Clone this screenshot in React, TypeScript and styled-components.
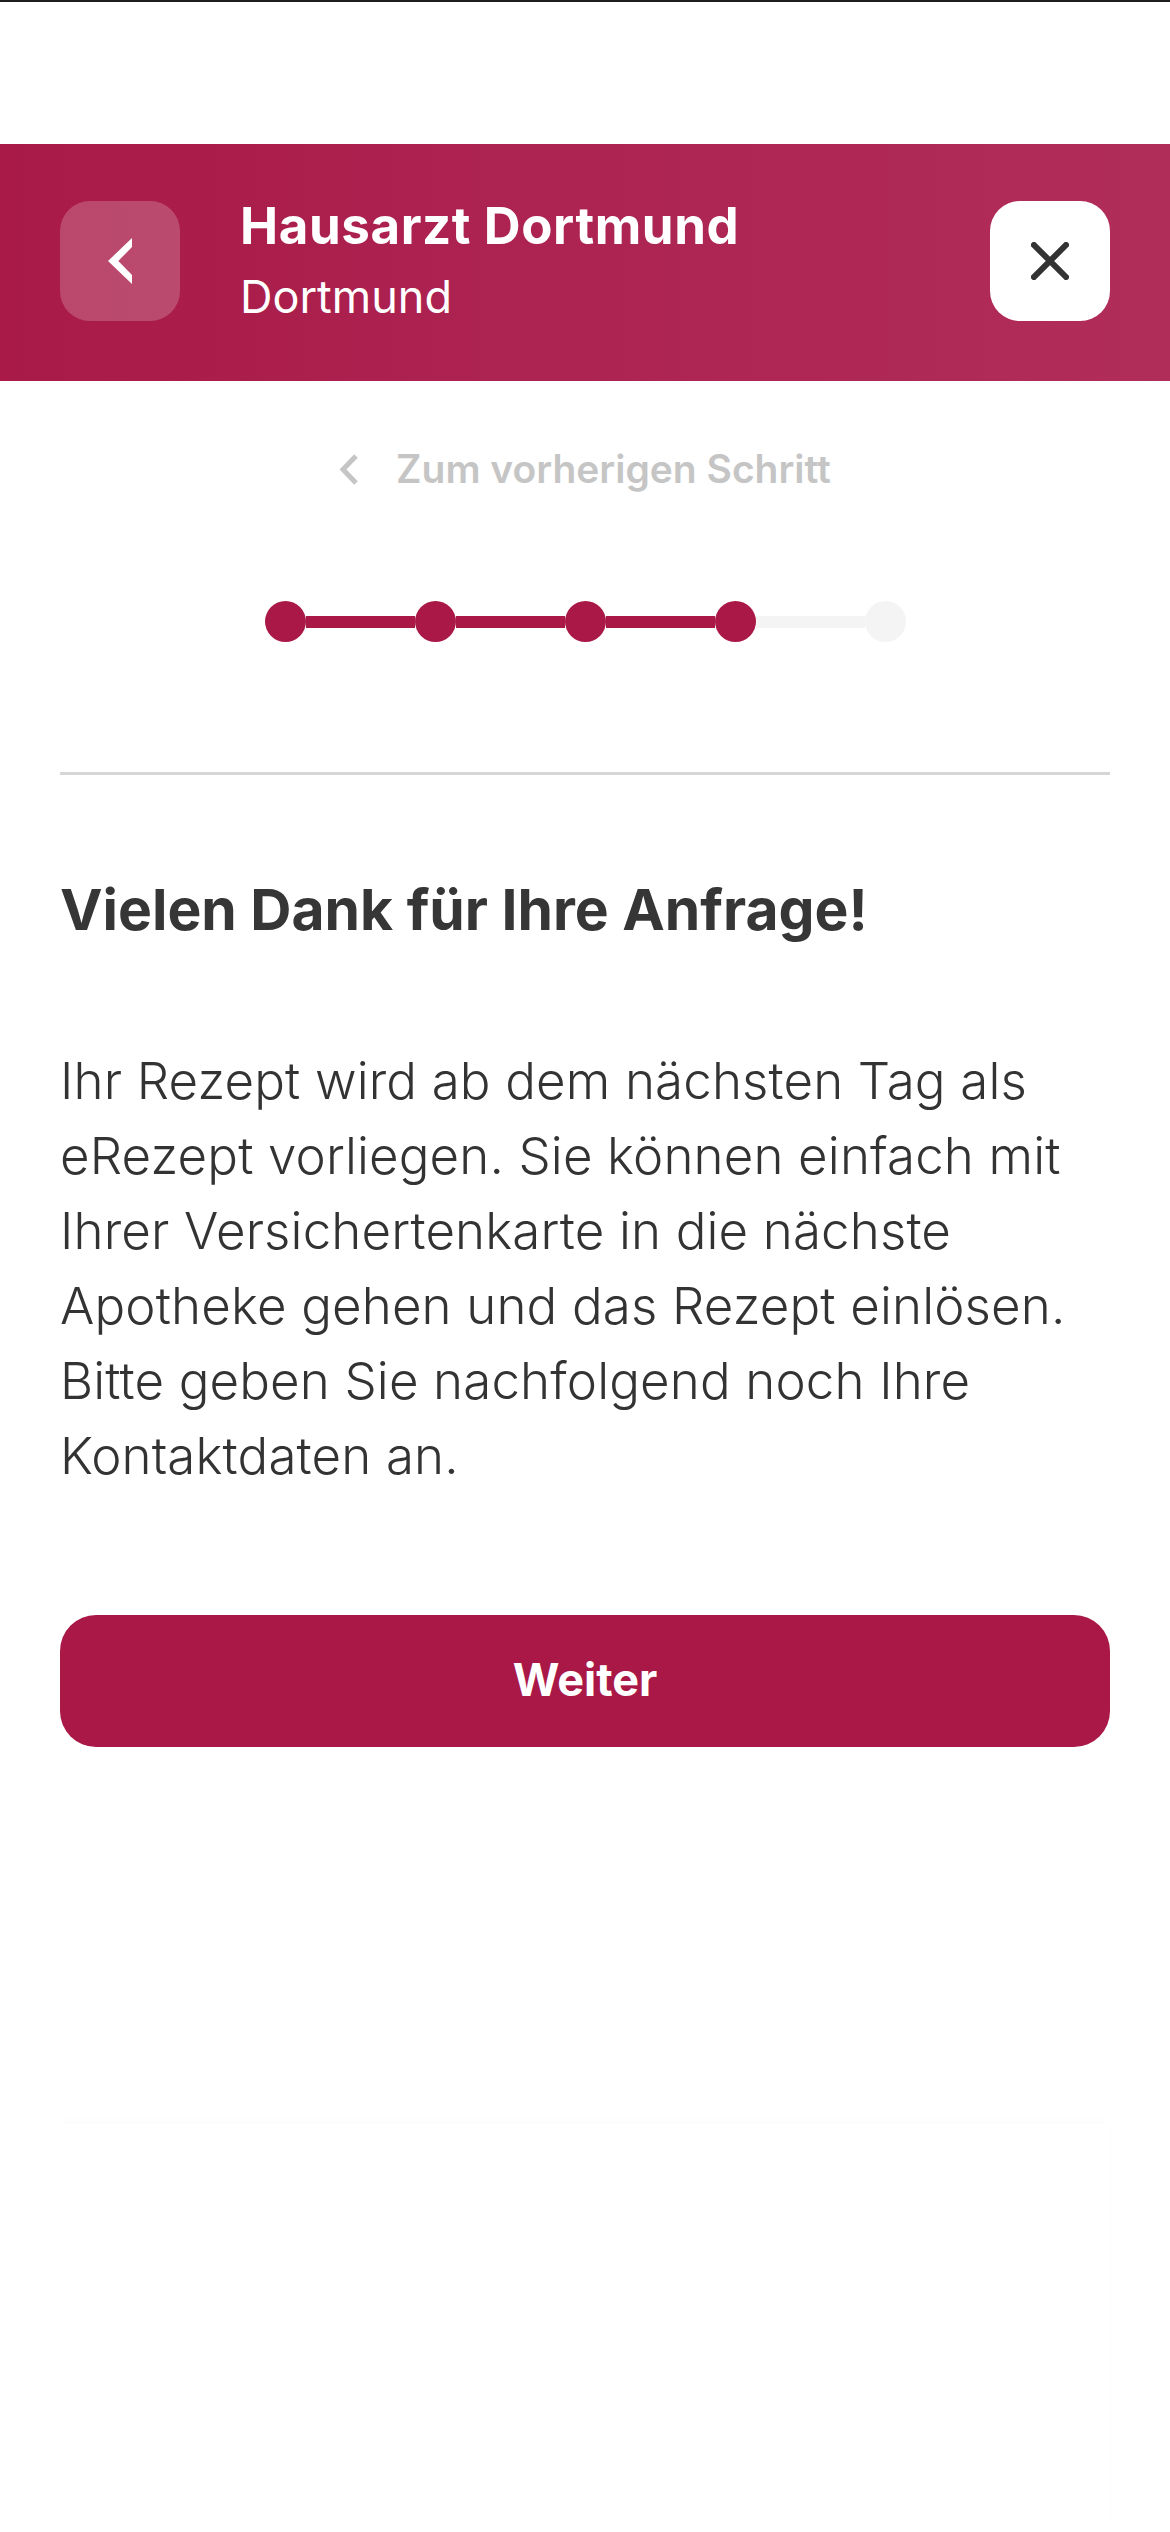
import React from "react";
import styled, { createGlobalStyle } from "styled-components";

const GlobalStyle = createGlobalStyle`
  html, body {
    margin: 0;
    padding: 0;
    background: #ffffff;
  }
  body {
    font-family: Inter, "Noto Sans", "Liberation Sans", sans-serif;
    -webkit-font-smoothing: antialiased;
  }
  * { box-sizing: border-box; }
`;

const Page = styled.div`
  width: 1170px;
  min-height: 2532px;
  display: flex;
  flex-direction: column;
  background: #ffffff;
`;

const StatusArea = styled.div`
  height: 144px;
  border-top: 2px solid #1e1e1e;
  background: #ffffff;
`;

const Header = styled.header`
  height: 237px;
  padding: 57px 60px 60px;
  display: flex;
  align-items: center;
  background: linear-gradient(90deg, #a91a48 0%, #ad2452 50%, #b12d59 100%);
`;

const IconButton = styled.button<{ $variant: "ghost" | "solid" }>`
  width: 120px;
  height: 120px;
  flex: 0 0 120px;
  border: none;
  border-radius: 30px;
  padding: 0;
  display: flex;
  align-items: center;
  justify-content: center;
  cursor: pointer;
  background: ${(p) => (p.$variant === "ghost" ? "rgba(255,255,255,0.2)" : "#ffffff")};
`;

const TitleBlock = styled.div`
  flex: 1;
  margin-left: 60px;
  display: flex;
  flex-direction: column;
  color: #ffffff;
`;

const Title = styled.div`
  font-size: 51px;
  line-height: 56px;
  font-weight: 700;
  letter-spacing: 0.6px;
`;

const Subtitle = styled.div`
  margin-top: 15px;
  font-size: 45px;
  line-height: 56px;
  font-weight: 400;
`;

const Main = styled.main`
  padding: 0 60px;
  display: flex;
  flex-direction: column;
`;

const BackLink = styled.a`
  margin-top: 64px;
  height: 48px;
  display: flex;
  align-items: center;
  justify-content: center;
  gap: 37px;
  color: #c5c5c5;
  font-size: 39px;
  line-height: 48px;
  font-weight: 600;
  text-decoration: none;
`;

const Stepper = styled.div`
  margin: 108px auto 0;
  display: flex;
  align-items: center;
`;

const Dot = styled.span<{ $done: boolean }>`
  width: 41px;
  height: 41px;
  border-radius: 50%;
  flex: 0 0 41px;
  background: ${(p) => (p.$done ? "#a91846" : "#f4f4f4")};
`;

const Connector = styled.span<{ $done: boolean }>`
  width: 109px;
  height: 12px;
  flex: 0 0 109px;
  background: ${(p) => (p.$done ? "#a91846" : "#f4f4f4")};
`;

const Divider = styled.hr`
  margin: 130px 0 0;
  border: none;
  height: 3px;
  background: #d6d6d6;
`;

const Heading = styled.h1`
  margin: 100px 0 0;
  font-size: 57px;
  line-height: 70px;
  font-weight: 700;
  color: #363636;
`;

const BodyText = styled.p`
  margin: 98px 0 0;
  font-size: 51px;
  line-height: 75px;
  font-weight: 300;
  letter-spacing: 0.15px;
  color: #333333;
`;

const PrimaryButton = styled.button`
  margin-top: 122px;
  height: 132px;
  width: 100%;
  border: none;
  border-radius: 36px;
  padding: 0 0 4px;
  background: #a91846;
  color: #ffffff;
  font-family: Inter, "Noto Sans", sans-serif;
  font-size: 45px;
  font-weight: 700;
  cursor: pointer;
`;

const Footer = styled.footer`
  margin: 377px 60px 0;
  flex: 1;
  background: #ffffff;
  box-shadow: 0 -5px 10px rgba(0, 0, 0, 0.012);
`;

const ChevronLeftSolid = () => (
  <svg width="24" height="46" viewBox="0 0 24 46" aria-hidden="true">
    <polygon points="24,0 0,23 24,46 24,37 10.3,23 24,9" fill="#ffffff" />
  </svg>
);

const CloseIcon = () => (
  <svg width="38" height="38" viewBox="0 0 38 38" aria-hidden="true">
    <path d="M3 3 L35 35 M35 3 L3 35" stroke="#333333" strokeWidth="6" strokeLinecap="square" fill="none" />
  </svg>
);

const ChevronLeftThin = () => (
  <svg width="20" height="31" viewBox="0 0 20 31" aria-hidden="true">
    <polyline points="17,2 4,15.5 17,29" stroke="#c5c5c5" strokeWidth="5" fill="none" />
  </svg>
);

const steps = [true, true, true, true, false];

export default function App() {
  return (
    <>
      <GlobalStyle />
      <Page>
        <StatusArea />
        <Header>
          <IconButton $variant="ghost" aria-label="Zurück">
            <ChevronLeftSolid />
          </IconButton>
          <TitleBlock>
            <Title>Hausarzt Dortmund</Title>
            <Subtitle>Dortmund</Subtitle>
          </TitleBlock>
          <IconButton $variant="solid" aria-label="Schließen">
            <CloseIcon />
          </IconButton>
        </Header>
        <Main>
          <BackLink href="#">
            <ChevronLeftThin />
            <span>Zum vorherigen Schritt</span>
          </BackLink>
          <Stepper>
            {steps.map((done, i) => (
              <React.Fragment key={i}>
                {i > 0 && <Connector $done={done} />}
                <Dot $done={done} />
              </React.Fragment>
            ))}
          </Stepper>
          <Divider />
          <Heading>Vielen Dank für Ihre Anfrage!</Heading>
          <BodyText>
            Ihr Rezept wird ab dem nächsten Tag als eRezept vorliegen. Sie können einfach mit Ihrer
            Versichertenkarte in die nächste Apotheke gehen und das Rezept einlösen. Bitte geben Sie
            nachfolgend noch Ihre Kontaktdaten an.
          </BodyText>
          <PrimaryButton>Weiter</PrimaryButton>
        </Main>
        <Footer />
      </Page>
    </>
  );
}
